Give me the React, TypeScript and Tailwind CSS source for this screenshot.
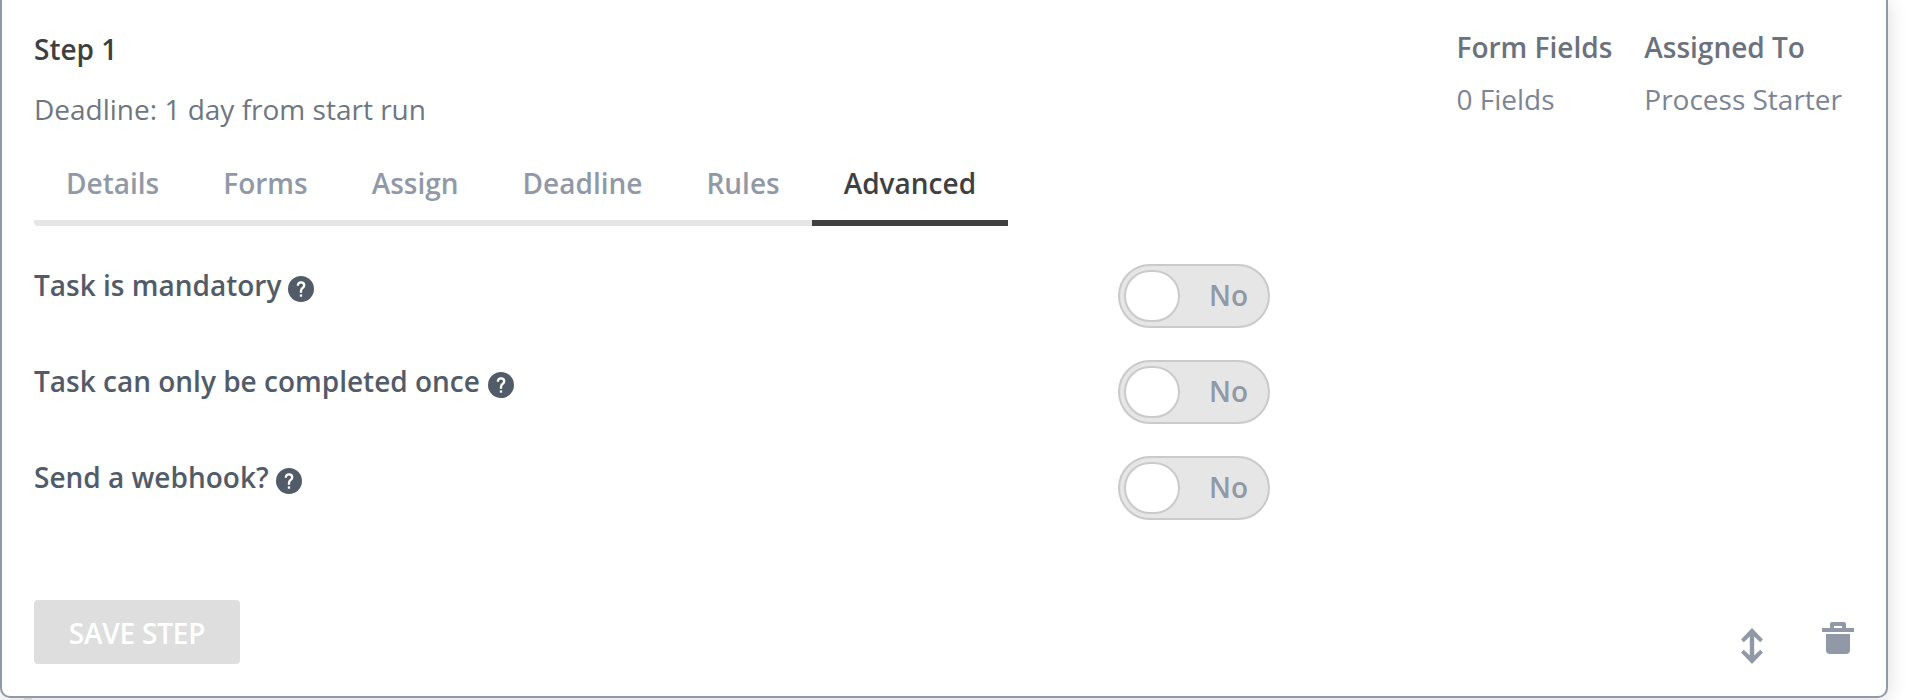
const TABS = ["Details", "Forms", "Assign", "Deadline", "Rules", "Advanced"];

const SETTINGS = [
  { label: "Task is mandatory", gap: "ml-[7px]" },
  { label: "Task can only be completed once", gap: "ml-2" },
  { label: "Send a webhook?", gap: "ml-[7px]" },
];

const META = [
  { title: "Form Fields", value: "0 Fields" },
  { title: "Assigned To", value: "Process Starter" },
];

function HelpIcon() {
  return (
    <svg viewBox="0 0 26 26" className="mt-[11px] h-[26px] w-[26px] shrink-0">
      <circle cx="13" cy="13" r="13" fill="#525c69" />
      <path
        d="M9.8 9.8C9.8 7.6 11 6.4 13 6.4s3.2 1.2 3.2 3c0 2.4-3.2 2.7-3.2 5.4v1.9"
        fill="none"
        stroke="#fff"
        strokeWidth="2.3"
      />
      <rect x="11.85" y="18.4" width="2.3" height="2.3" fill="#fff" />
    </svg>
  );
}

function MoveIcon() {
  return (
    <svg viewBox="0 0 22 36" className="mt-[8px] h-9 w-[22px]" fill="#9199a7">
      <path d="M11 0 22 11.4 19.2 14.2 13.2 8.4V27.6L19.2 21.8 22 24.6 11 36 0 24.6 2.8 21.8 8.8 27.6V8.4L2.8 14.2 0 11.4Z" />
    </svg>
  );
}

function TrashIcon() {
  return (
    <svg viewBox="0 0 32 32" className="mt-[2px] h-8 w-8" fill="#9199a7">
      <path d="M8 6V2q0-2 2-2h12q2 0 2 2v4h8v4H0V6Zm4 0h8V4h-8Z" fillRule="evenodd" />
      <path d="M4 12h24v16q0 4-4 4H8q-4 0-4-4Z" />
    </svg>
  );
}

function Toggle() {
  return (
    <button className="flex h-16 w-[152px] items-center rounded-full border-2 border-[#cacaca] bg-[#e6e6e6] pl-1">
      <span className="h-[52px] w-14 shrink-0 rounded-[26px] border-2 border-[#cacaca] bg-white" />
      <span className="-mt-0.5 ml-[29px] font-semibold leading-10 text-[#9199a7]">No</span>
    </button>
  );
}

export default function App() {
  return (
    <div className="h-[700px] w-full overflow-hidden bg-white font-['Open_Sans',sans-serif] text-[28px] leading-10">
      <div className="flex h-[698px] w-[1888px] flex-col rounded-b-[10px] border-2 border-t-0 border-[#9199a7] bg-white pl-8 shadow-[0_2px_20px_rgba(0,0,0,0.15)]">
        {/* Header */}
        <div className="flex h-[163px] justify-between pr-11">
          <div className="pt-[29px]">
            <h2 className="font-semibold text-[#404041]">Step 1</h2>
            <p className="mt-5 text-[#6e7681]">Deadline: 1 day from start run</p>
          </div>
          <div className="flex gap-8 pt-[27px]">
            {META.map((item) => (
              <div key={item.title}>
                <div className="font-semibold text-[#6b727d]">{item.title}</div>
                <div className="mt-3 text-[#7b8594]">{item.value}</div>
              </div>
            ))}
          </div>
        </div>

        {/* Tabs */}
        <div className="flex h-[63px] w-max overflow-hidden rounded-bl">
          {TABS.map((tab) => (
            <button
              key={tab}
              className={
                tab === "Advanced"
                  ? "flex items-start border-b-6 border-[#404041] px-8 font-semibold text-[#404041]"
                  : "flex items-start border-b-6 border-[#e6e6e6] px-8 font-semibold text-[#9199a7]"
              }
            >
              {tab}
            </button>
          ))}
        </div>

        {/* Settings */}
        <div className="mt-[38px] flex flex-col gap-8">
          {SETTINGS.map((setting) => (
            <div key={setting.label} className="flex h-16">
              <div className="flex w-[1084px] items-start pt-px font-semibold text-[#525c69]">
                {setting.label}
                <span className={setting.gap}>
                  <HelpIcon />
                </span>
              </div>
              <Toggle />
            </div>
          ))}
        </div>

        {/* Footer */}
        <div className="mt-20 flex items-start pr-8">
          <button className="h-16 w-[206px] rounded bg-[#dedede] pt-0.5 font-semibold tracking-[-0.2px] text-white">
            SAVE STEP
          </button>
          <div className="ml-auto flex items-start gap-[59px] pt-5">
            <MoveIcon />
            <TrashIcon />
          </div>
        </div>
      </div>
      {/* Connector to the next step */}
      <div className="relative ml-6 h-0.5 w-2 bg-[#d6d6d8]" />
    </div>
  );
}
